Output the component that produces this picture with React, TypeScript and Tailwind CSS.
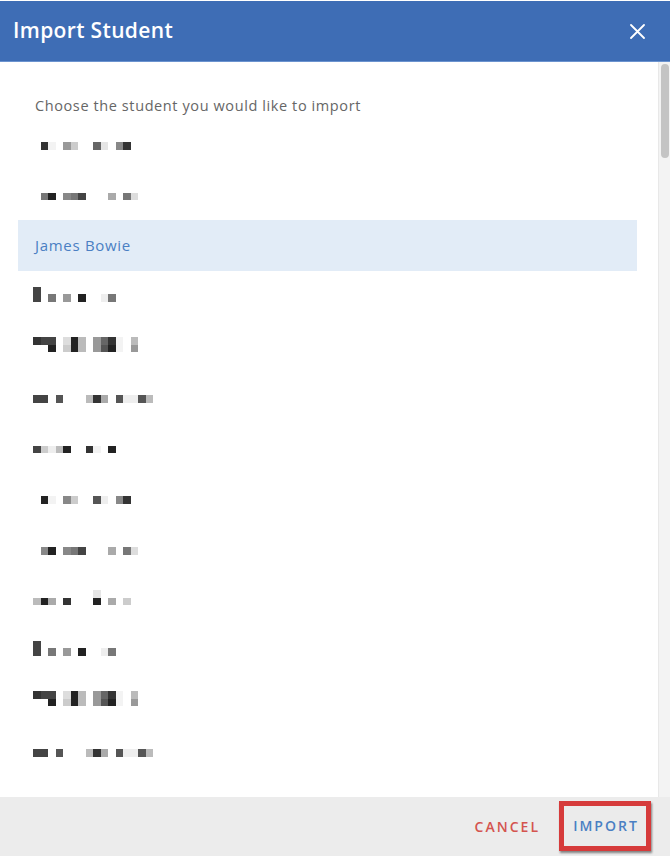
import React from 'react';

type Cell = [number, string, string?]; // [column, bottom colour, top colour]

// pixelated (censored) names, column grid is 7.5px wide
const blurredRows: Cell[][] = [
  [[1, '#333'], [2, '#f3f3f3'], [4, '#999'], [5, '#ccc'], [8, '#666'], [9, '#e5e5e5'], [11, '#888'], [12, '#333']],
  [[1, '#777'], [2, '#222'], [4, '#888'], [5, '#777'], [6, '#444'], [10, '#aaa'], [12, '#777'], [13, '#ddd']],
  [],
  [[0, '#444', '#444'], [2, '#777'], [4, '#999'], [6, '#222'], [9, '#eee'], [10, '#777']],
  [[0, '#fff', '#333'], [1, '#fff', '#444'], [2, '#222', '#444'], [4, '#ccc', '#ddd'], [5, '#222', '#222'], [6, '#bbb', '#bbb'], [8, '#999', '#999'], [9, '#555', '#666'], [10, '#222', '#333'], [11, '#f3f3f3', '#f3f3f3'], [13, '#999', '#bbb']],
  [[0, '#444'], [1, '#444'], [3, '#555'], [7, '#bbb'], [8, '#333'], [9, '#aaa'], [11, '#555'], [12, '#eee'], [13, '#eee'], [14, '#555'], [15, '#bbb']],
  [[0, '#444'], [1, '#ccc'], [2, '#eee'], [3, '#bbb'], [4, '#222'], [7, '#333'], [8, '#f3f3f3'], [10, '#222']],
  [[1, '#222'], [2, '#f3f3f3'], [4, '#888'], [5, '#ccc'], [8, '#555'], [9, '#eee'], [11, '#888'], [12, '#333']],
  [[1, '#888'], [2, '#222'], [4, '#888'], [5, '#777'], [6, '#444'], [10, '#aaa'], [12, '#777'], [13, '#ddd']],
  [[0, '#bbb'], [1, '#222'], [2, '#aaa'], [4, '#333'], [8, '#222', '#e5e5e5'], [10, '#aaa'], [12, '#ccc']],
  [[0, '#444', '#444'], [2, '#777'], [4, '#999'], [6, '#222'], [9, '#eee'], [10, '#777']],
  [[0, '#fff', '#333'], [1, '#fff', '#444'], [2, '#222', '#444'], [4, '#ccc', '#ddd'], [5, '#222', '#222'], [6, '#bbb', '#bbb'], [8, '#999', '#999'], [9, '#555', '#666'], [10, '#222', '#333'], [11, '#f3f3f3', '#f3f3f3'], [13, '#999', '#bbb']],
  [[0, '#444'], [1, '#444'], [3, '#555'], [7, '#bbb'], [8, '#333'], [9, '#aaa'], [11, '#555'], [12, '#eee'], [13, '#eee'], [14, '#555'], [15, '#bbb']],
];

const Blurred: React.FC<{ cells: Cell[] }> = ({ cells }) => {
  const cols = Array.from({ length: 16 }, (_, i) => cells.find((c) => c[0] === i));
  return (
    <div className="flex -translate-y-[2px]">
      {cols.map((c, i) => (
        <div key={i} className="flex flex-col w-[7.5px]">
          <div className="h-[7.5px]" style={{ background: c?.[2] ?? 'transparent' }} />
          <div className="h-[7.5px]" style={{ background: c?.[1] ?? 'transparent' }} />
        </div>
      ))}
    </div>
  );
};

export default function App() {
  const font = { fontFamily: '"Open Sans", "Liberation Sans", sans-serif' };

  return (
    <div className="w-[670px] h-[866px] bg-white flex flex-col border-t border-white" style={font}>
      {/* header */}
      <div className="h-[61px] bg-[#3e6db5] border-b border-[#6b93cf] flex items-center justify-between pl-[13px] pr-[25px] shrink-0">
        <h1 className="text-white text-[21px] font-semibold tracking-[0.35px]">Import Student</h1>
        <svg width="15" height="15" viewBox="0 0 15 15" className="text-white">
          <path d="M1 1 L14 14 M14 1 L1 14" stroke="currentColor" strokeWidth="1.8" strokeLinecap="round" />
        </svg>
      </div>

      {/* body */}
      <div className="flex-1 flex min-h-0">
        <div className="flex-1 pl-[18px] pr-[21px]">
          <p className="pt-[34px] h-[57px] pl-[17px] text-[14.5px] leading-[20px] tracking-[0.6px] text-[#666]">
            Choose the student you would like to import
          </p>
          <ul>
            {blurredRows.map((cells, i) =>
              i === 2 ? (
                <li key={i} className="h-[50.6px] bg-[#e2ecf7] flex items-center pl-[17px] text-[15px] tracking-[0.7px] text-[#4a7fc3]">
                  James Bowie
                </li>
              ) : (
                <li key={i} className="h-[50.6px] flex items-center pl-[15px]">
                  <Blurred cells={cells} />
                </li>
              )
            )}
          </ul>
        </div>
        {/* scrollbar */}
        <div className="w-[12px] bg-[#f3f3f3] border-l border-[#e8e8e8] pt-[2px] pl-[2px] pr-[1px]">
          <div className="h-[94px] rounded-full bg-[#c4c4c4]" />
        </div>
      </div>

      {/* footer */}
      <div className="h-[59px] bg-[#ececec] flex items-center justify-end pr-[19px] gap-[19px] shrink-0">
        <button className="text-[14px] font-semibold tracking-[2px] text-[#d4544f]">CANCEL</button>
        <button className="w-[92px] h-[50px] -translate-y-[1px] border-[5px] border-[#d63b3b] bg-[#ebebeb] shadow-[1px_2px_2px_rgba(0,0,0,0.45)] text-[14px] font-semibold tracking-[2px] text-[#4a7fc3] flex items-center justify-center pl-[2px]">
          IMPORT
        </button>
      </div>
      <div className="h-[10px] shrink-0" />
    </div>
  );
}
